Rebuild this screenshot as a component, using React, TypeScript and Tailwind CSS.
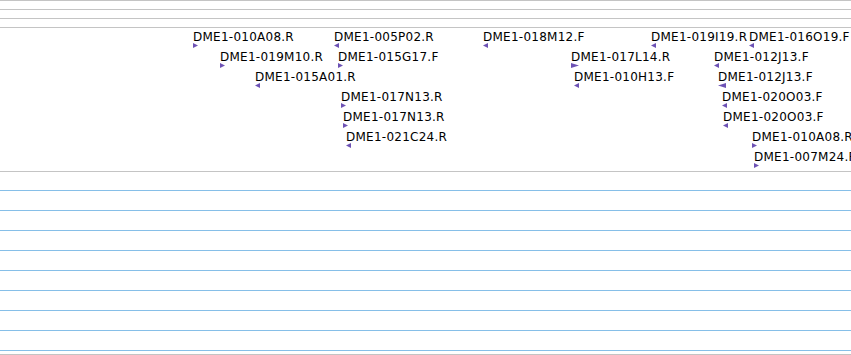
type Feature = {
  name: string
  pos: string
  dir: 'l' | 'r'
  wide?: boolean
}

// clone features laid out by genomic position (top = row * 20px)
const features: Feature[] = [
  { name: 'DME1-010A08.R', pos: 'left-[193px] top-[3px]', dir: 'r' },
  { name: 'DME1-019M10.R', pos: 'left-[220px] top-[23px]', dir: 'r' },
  { name: 'DME1-015A01.R', pos: 'left-[255px] top-[43px]', dir: 'l' },
  { name: 'DME1-005P02.R', pos: 'left-[334px] top-[3px]', dir: 'l' },
  { name: 'DME1-015G17.F', pos: 'left-[338px] top-[23px]', dir: 'r' },
  { name: 'DME1-017N13.R', pos: 'left-[341px] top-[63px]', dir: 'r' },
  { name: 'DME1-017N13.R', pos: 'left-[343px] top-[83px]', dir: 'r' },
  { name: 'DME1-021C24.R', pos: 'left-[346px] top-[103px]', dir: 'l' },
  { name: 'DME1-018M12.F', pos: 'left-[483px] top-[3px]', dir: 'l' },
  { name: 'DME1-017L14.R', pos: 'left-[571px] top-[23px]', dir: 'r', wide: true },
  { name: 'DME1-010H13.F', pos: 'left-[574px] top-[43px]', dir: 'l' },
  { name: 'DME1-019I19.R', pos: 'left-[651px] top-[3px]', dir: 'l' },
  { name: 'DME1-016O19.F', pos: 'left-[749px] top-[3px]', dir: 'l' },
  { name: 'DME1-012J13.F', pos: 'left-[714px] top-[23px]', dir: 'l' },
  { name: 'DME1-012J13.F', pos: 'left-[718px] top-[43px]', dir: 'l', wide: true },
  { name: 'DME1-020O03.F', pos: 'left-[722px] top-[63px]', dir: 'l' },
  { name: 'DME1-020O03.F', pos: 'left-[723px] top-[83px]', dir: 'l' },
  { name: 'DME1-010A08.R', pos: 'left-[752px] top-[103px]', dir: 'r' },
  { name: 'DME1-007M24.F', pos: 'left-[754px] top-[123px]', dir: 'r' },
]

function Arrow({ dir, wide }: { dir: 'l' | 'r'; wide?: boolean }) {
  const w = wide ? 8 : 5
  const points = dir === 'r' ? `0,0 ${w},2.5 0,5` : `${w},0 0,2.5 ${w},5`
  return (
    <svg width={w} height={5} viewBox={`0 0 ${w} 5`} className="block">
      <polygon points={points} fill="#6d52b5" />
    </svg>
  )
}

export default function App() {
  return (
    <div className="h-[355px] w-[851px] overflow-hidden bg-white font-['DejaVu_Sans',sans-serif]">
      <div className="h-[9px] border-t border-[#c4c4c4]" />
      <div className="h-[9px] border-t border-[#c4c4c4]" />
      <div className="h-[9px] border-t border-[#c4c4c4]" />

      <div className="relative h-[144px] border-t border-[#c4c4c4]">
        {features.map((f, i) => (
          <div key={i} className={`absolute flex flex-col ${f.pos}`}>
            <span className="whitespace-nowrap text-[12px] leading-[12px] tracking-[0.25px] text-black">
              {f.name}
            </span>
            <Arrow dir={f.dir} wide={f.wide} />
          </div>
        ))}
      </div>

      <div className="h-[19px] border-t border-[#c4c4c4]" />
      <div className="h-[20px] border-t border-[#86bfe8]" />
      <div className="h-[20px] border-t border-[#86bfe8]" />
      <div className="h-[20px] border-t border-[#86bfe8]" />
      <div className="h-[20px] border-t border-[#86bfe8]" />
      <div className="h-[20px] border-t border-[#86bfe8]" />
      <div className="h-[20px] border-t border-[#86bfe8]" />
      <div className="h-[20px] border-t border-[#86bfe8]" />
      <div className="h-[20px] border-t border-[#86bfe8]" />
      <div className="h-[4px] border-t border-[#86bfe8]" />
      <div className="h-[1px] border-t border-[#c4c4c4]" />
    </div>
  )
}
